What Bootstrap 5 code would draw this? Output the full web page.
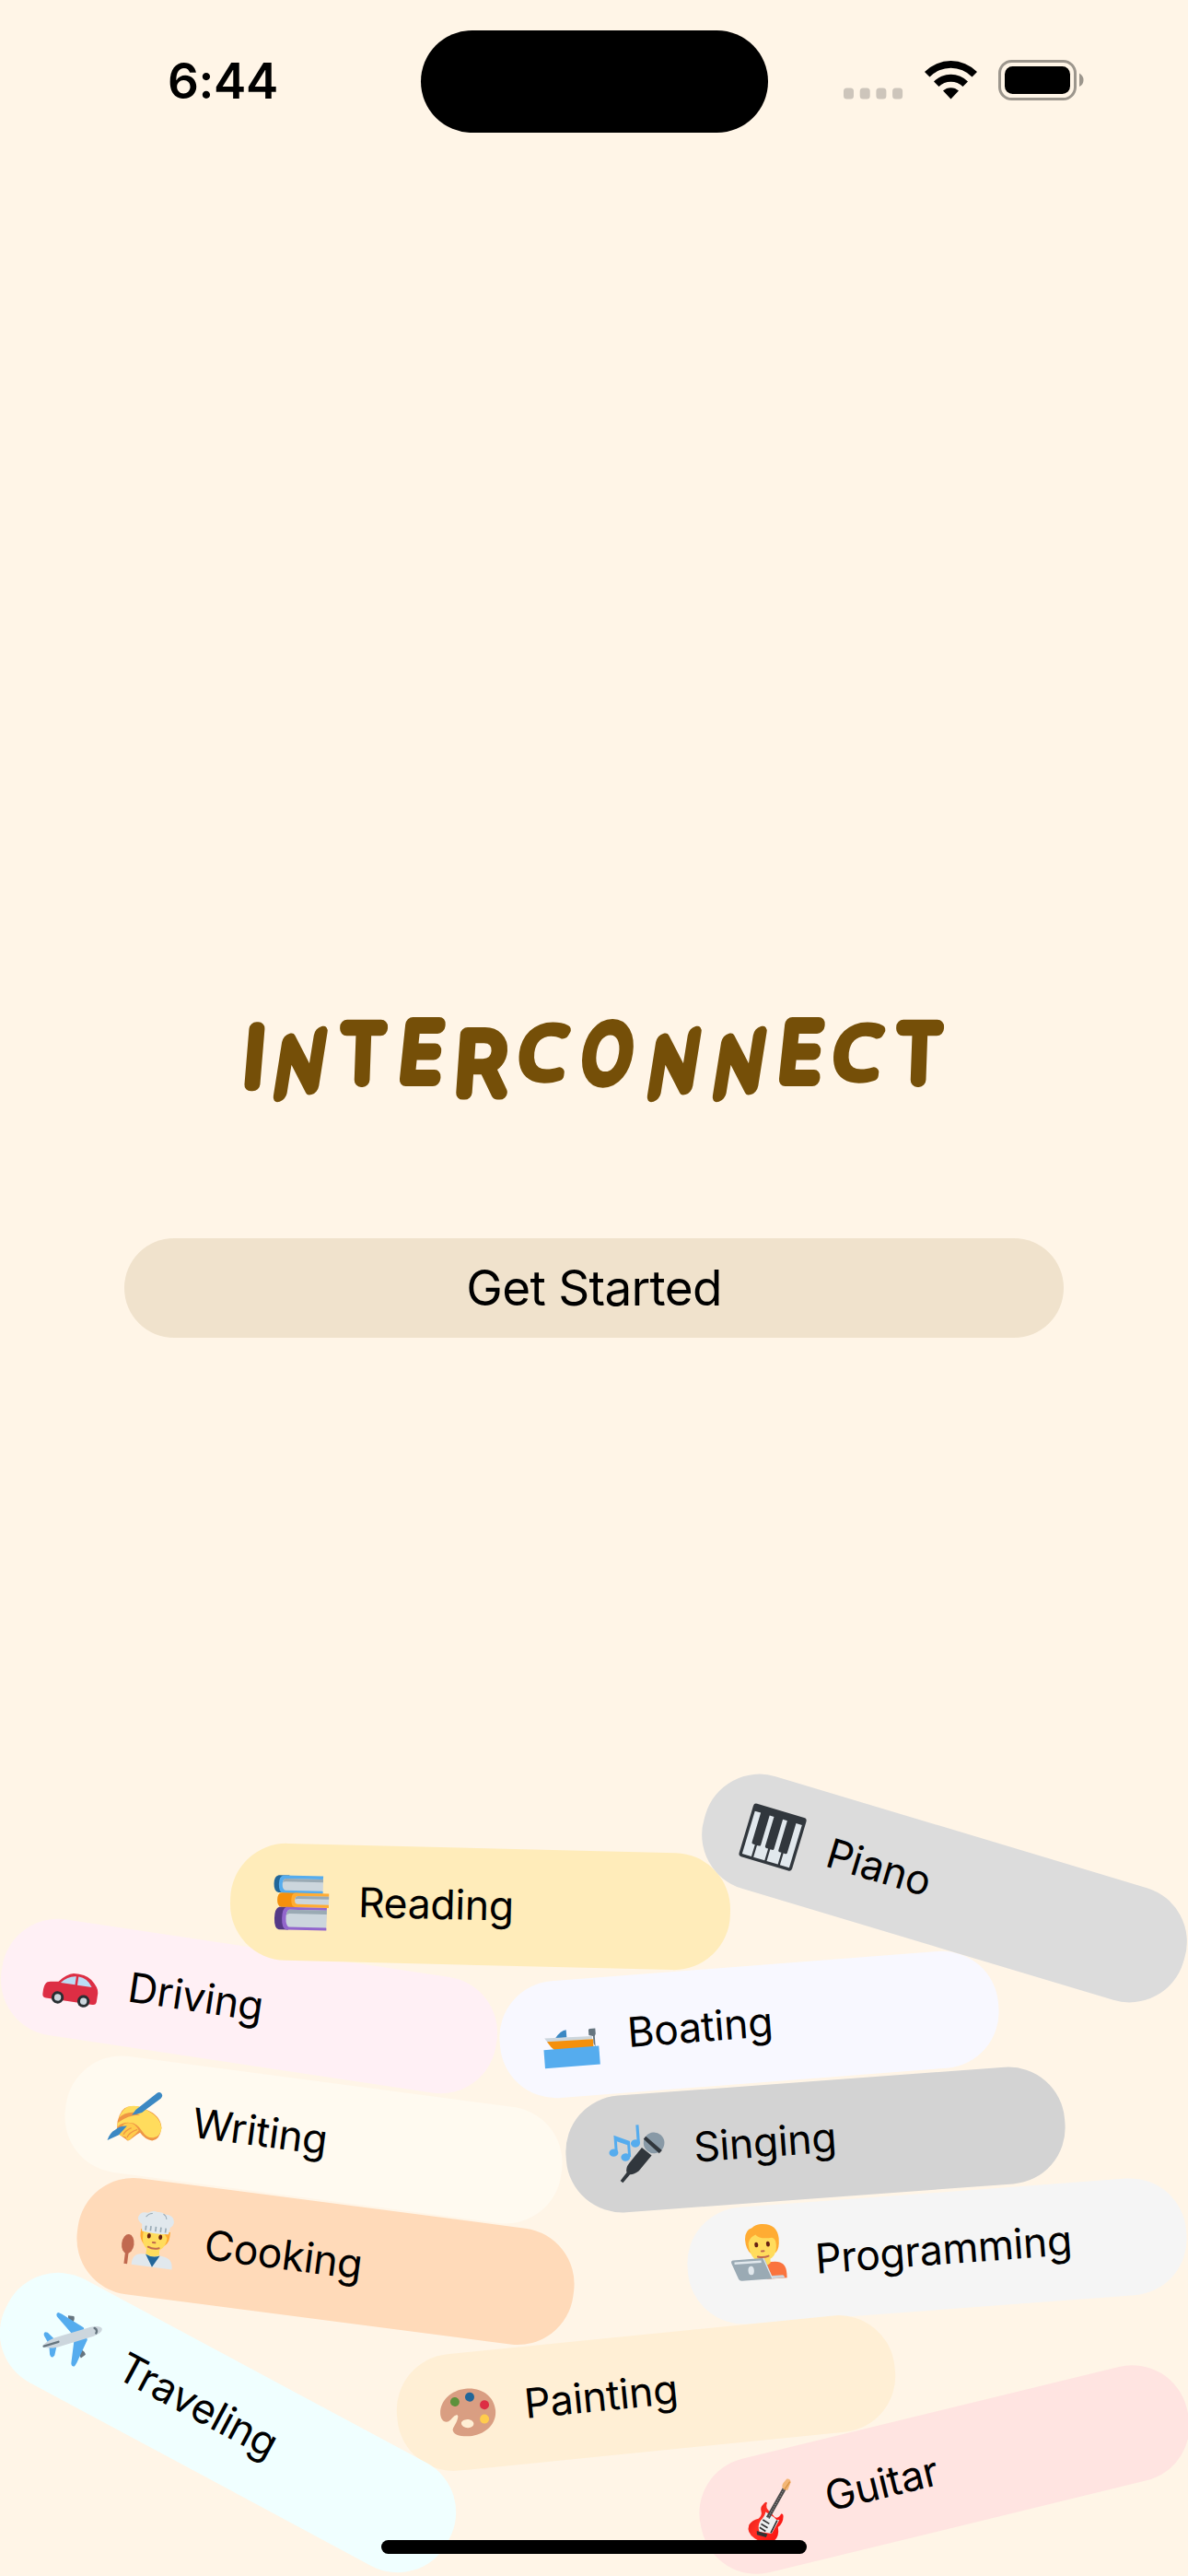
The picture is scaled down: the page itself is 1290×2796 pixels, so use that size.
<!DOCTYPE html>
<html lang="en">
<head>
<meta charset="utf-8">
<meta name="viewport" content="width=device-width, initial-scale=1">
<title>Interconnect</title>
<link href="https://cdn.jsdelivr.net/npm/bootstrap@5.3.0/dist/css/bootstrap.min.css" rel="stylesheet">
<style>
  body { background: #fff5e7; color: #000; font-family: Inter, "Liberation Sans", sans-serif; }
  .screen { width: 1290px; height: 2796px; }
  .status-bar { height: 178px; padding: 33px 113px 0 0; }
  .clock { width: 457px; flex: none; padding: 24px 0 0 182px; font-size: 53px; font-weight: 600; line-height: 62px; letter-spacing: -.4px; }
  .island { width: 377px; height: 111px; flex: none; background: #000; }
  .indicators { flex: none; margin-left: auto; margin-top: 30px; }
  .brand { margin-top: 907px; height: 150px; line-height: 1; }
  .brand svg { display: block; overflow: visible; }
  .brand text { font-family: Inter, sans-serif; font-weight: 100; font-size: 100px; text-anchor: middle;
    fill: #754f08; stroke: #754f08; stroke-width: 20; stroke-linejoin: round; stroke-linecap: round; }
  .brand .open { font-family: "Open Sans", sans-serif; font-weight: 300; stroke-width: 16; }
  .brand .slim { stroke-width: 17.5; }
  .start { width: 1020px; height: 108px; margin-top: 109px; padding: 0; background: #f0e2cc; color: #000; font-size: 53px; line-height: 108px; letter-spacing: -.7px; border: 0; }
  .start:hover { background: #e8d8be; }
  .chip { position: absolute; width: 543px; height: 127px; border-radius: 61px; padding-left: 47px; font-size: 44.5px; line-height: 1; white-space: nowrap; letter-spacing: -.3px; }
  .chip svg { width: 60px; height: 60px; flex: none; margin-right: 32px; overflow: visible; }
  .chip span { position: relative; top: -1.5px; }
  .reading { left: 249.8px; top: 553.7px; transform: rotate(1.4deg); background: #ffecba; }
  .piano { left: 753.6px; top: 534.3px; transform: rotate(16.7deg); background: #dcdcdc; }
  .driving { left: -.9px; top: 662px; transform: rotate(8.55deg); background: #fff0f5; }
  .boating { left: 542.1px; top: 681.8px; transform: rotate(-4.4deg); background: #f8f8ff; }
  .writing { left: 69.1px; top: 806.5px; transform: rotate(7.5deg); background: #fffaf0; }
  .singing { left: 614.1px; top: 807.3px; transform: rotate(-4.2deg); background: #d3d3d3; }
  .cooking { left: 82.2px; top: 939.1px; transform: rotate(7.4deg); background: #ffdab9; }
  .programming { left: 746.1px; top: 927.5px; transform: rotate(-4.25deg); background: #f5f5f5; }
  .programming svg { position: relative; top: -14px; }
  .traveling { left: -23.8px; top: 1113.8px; transform: rotate(28.2deg); background: #f0ffff; }
  .painting { left: 430.4px; top: 1081.8px; transform: rotate(-5.7deg); background: #ffefd5; }
  .guitar { left: 754px; top: 1164.5px; transform: rotate(-13.7deg); background: #ffe4e1; }
  .home-bar { position: absolute; left: 414px; bottom: 24px; width: 462px; height: 15px; background: #000; }
</style>
</head>
<body>
<div class="screen d-flex flex-column align-items-center position-relative overflow-hidden">

  <header class="status-bar d-flex w-100 align-items-start">
    <div class="clock">6:44</div>
    <div class="island rounded-pill"></div>
    <svg class="indicators" width="264" height="80" viewBox="0 0 264 80">
      <g fill="#cdc5bb"><rect x="3" y="32.5" width="11" height="12" rx="3.5"/><rect x="20.7" y="32.5" width="11" height="12" rx="3.5"/><rect x="38.4" y="32.5" width="11" height="12" rx="3.5"/><rect x="56.1" y="32.5" width="11" height="12" rx="3.5"/></g>
      <g>
        <path d="M91 15A40 40 0 0 1 148 15L142.500 20.500A32 32 0 0 0 96.500 20.500Z"/>
        <path d="M101 25.500A26 26 0 0 1 138 25.500L132.500 31A18.500 18.500 0 0 0 106.500 31Z"/>
        <path d="M111 35.500A12.500 12.500 0 0 1 128 35.500L119.500 44.500Z"/>
      </g>
      <rect x="172.500" y="3.500" width="82" height="41" rx="13" fill="none" stroke="#9c968d" stroke-width="3"/>
      <rect x="178" y="9" width="71" height="30" rx="8.500"/>
      <path d="M259 16.500Q263.500 19 263.500 24Q263.500 29 259 31Z" fill="#9c968d"/>
    </svg>
  </header>

  <h1 class="brand w-100 mb-0"><svg width="1290" height="150" viewBox="0 -10 1290 150"><text class="slim" transform="translate(274 82) skewX(-4.700) scale(.86 .83)">I</text><text transform="translate(321.500 89) skewX(-9) skewY(-13) scale(.64 .8)">N</text><text transform="translate(393 77) skewX(-2) scale(.75 .79)">T</text><text transform="translate(454.500 76) skewX(-6) scale(.74 .81)">E</text><text class="slim" transform="translate(520 91) skewX(-4) scale(.88 .87)">R</text><text class="open" transform="translate(586 74) skewX(-7) scale(.77 .74)">C</text><text transform="translate(656 77) skewX(-8) scale(.68 .79)">O</text><text transform="translate(727.500 89) skewX(-9) skewY(-13) scale(.64 .8)">N</text><text transform="translate(798.500 89) skewX(-9) skewY(-13) scale(.64 .8)">N</text><text transform="translate(866.500 76) skewX(-6) scale(.74 .81)">E</text><text class="open" transform="translate(927.500 74) skewX(-7) scale(.77 .74)">C</text><text transform="translate(997 77) skewX(-2) scale(.75 .79)">T</text></svg></h1>

  <button type="button" class="start btn rounded-pill">Get Started</button>

  <section class="position-relative w-100 flex-grow-1">
    <div class="chip driving d-flex align-items-center">
      <svg viewBox="0 0 36 36"><path fill="#dd2e44" d="M.5 28.500C.5 23 1.500 21.300 5 21L9.500 20.300Q14 14.500 18.500 13.600Q26 12.800 30.500 16Q36 20.500 36 24V29.500Q36 32 33.500 32H3Q.5 32 .5 29.500Z"/><path fill="#bbddf5" d="M11 20.800Q15 15.800 20.500 15.300V20.800ZM22 15.300Q28 15.300 31.500 20.800H22Z"/><g fill="#292f33"><circle cx="10.500" cy="30.600" r="4"/><circle cx="27.500" cy="30.600" r="4"/></g><g fill="#ccd6dd"><circle cx="10.500" cy="30.600" r="2.200"/><circle cx="27.500" cy="30.600" r="2.200"/></g></svg>
      <span>Driving</span>
    </div>
    <div class="chip reading d-flex align-items-center">
      <svg viewBox="0 0 36 36"><path fill="#226699" d="M3 .4H10V11.600H3Q0 11 0 6Q0 1 3 .4Z"/><path fill="#55acee" d="M6 .4H32V2.200L31.500 2.500V10L32 10.300V12H6Q3.200 11.500 3.200 6.200Q3.200 1 6 .4Z"/><path fill="#ccd6dd" d="M7.500 2.500H32V10.200H7.500Q5.500 9.500 5.500 6.300Q5.500 3.100 7.500 2.500Z"/><path fill="#9aaab4" d="M7.500 2.500H32V4.500H8Q6 4.500 5.600 5.400Q6 3 7.500 2.500Z"/><path fill="#f4900c" d="M5 11.700H16V21H5Q2.400 20.500 2.400 16.400Q2.400 12.200 5 11.700Z"/><path fill="#ffac33" d="M14 11.700H36V13.500L35.700 13.900V18.500L36 19V21H14Q11.500 20.500 11.500 16.400Q11.500 12.200 14 11.700Z"/><path fill="#ccd6dd" d="M15.500 13.700H36V19H15.500Q13.800 18.600 13.800 16.400Q13.800 14.200 15.500 13.700Z"/><path fill="#9aaab4" d="M15.500 13.700H36V15.500H16Q14.500 15.500 14 16Q14 14.200 15.500 13.700Z"/><path fill="#553986" d="M3.800 21H10V35.800H3.800Q.8 35 .8 28.400Q.8 22 3.800 21Z"/><path fill="#9266cc" d="M8.500 21H34.800V22.600L34.500 23V33.700L34.800 34.200V35.800H8.500Q5.700 35 5.700 28.400Q5.700 22 8.500 21Z"/><path fill="#ccd6dd" d="M10.300 22.700H34.800V34H10.300Q8.300 33 8.300 28.400Q8.300 23.500 10.300 22.700Z"/><path fill="#9aaab4" d="M10.300 22.700H34.800V25.200H10.500Q8.800 25.500 8.500 26.500Q8.800 23.200 10.300 22.700Z"/></svg>
      <span>Reading</span>
    </div>
    <div class="chip boating d-flex align-items-center">
      <svg viewBox="0 0 36 36"><path fill="#3b88c3" d="M8 17Q12 12 15.500 12V17Z"/><path fill="#ccd6dd" d="M1 16.500L32 17.300V19.500H3Z"/><path fill="#f4900c" d="M2.500 18.800L32.500 19.300V25H7.500Q4.500 22.500 2.500 18.800Z"/><path fill="#66757f" d="M30 13.200Q30 12.400 31 12.400H34.500V16L33.800 17.500V24.500L32.700 22V17.300L30 16.500Z"/><path fill="#55acee" d="M0 24H36V36H0Z"/></svg>
      <span>Boating</span>
    </div>
    <div class="chip piano d-flex align-items-center">
      <svg viewBox="0 0 36 36"><rect width="36" height="36" rx="2" fill="#31373d"/><path fill="#e1e8ed" d="M2 5H6V25Q6 26 7 26H8.300V34H2ZM12 5H15V25Q15 26 16 26H17.300V34H9.700V26H11Q12 26 12 25ZM21 5H24V25Q24 26 25 26H26.300V34H18.700V26H20Q21 26 21 25ZM30 5H34V34H27.700V26H29Q30 26 30 25Z"/></svg>
      <span>Piano</span>
    </div>
    <div class="chip writing d-flex align-items-center">
      <svg viewBox="0 0 36 36"><path fill="#ef9645" d="M6.500 22.500Q7.500 13.500 12 12.200Q18 9.800 24 12.500Q34 15 35.500 23Q35.300 31 30.500 32Q26 32 22 27.800Q18 31 17 32.500Q15 35 13.700 33.500L10 31.500L7 30Z"/><path fill="#ffdc5d" d="M7 20.200Q9 13.200 12.500 12Q18 9.700 25 13Q34 16.500 35.500 23Q35.500 29 31 30Q27 31 23.500 27Q19 21.500 14.500 22.300Q9.500 22.500 7 26Q6.300 24.500 7 23.200Q13 17.200 20.500 16.500L17 15.200Q10.500 15.500 7 20.200Z"/><path fill="#ffcc4d" d="M11 23.500Q17 20.500 21 26.500L19 29.500Q17 31.500 16.700 32.300Q15.800 34.200 14 33.500L13.300 32L9.500 31.300L7 30Z"/><path fill="none" stroke="#ef9645" stroke-width=".8" d="M16 25.500Q12 28 11.500 30.500M20 26Q15 28.500 14 32"/><path fill="#3b88c3" d="M29.500 1Q31 -.5 32.500 .8Q34 2.200 32.500 4L21.500 14.700Q18 16.500 15.200 17.200L17.300 13.500ZM13 24.600L8.500 31.200L1.500 35.500Q2.500 30.500 5.700 28.200Q8 25.200 13 24.600Z"/></svg>
      <span>Writing</span>
    </div>
    <div class="chip singing d-flex align-items-center">
      <svg viewBox="0 0 36 36"><path fill="#31373d" d="M21.500 14.500L27.500 20L18.500 29.500Q15 31.800 12.500 31.500L7.500 36.500L6 35L10.500 30Q9.800 27 12.500 24Z"/><circle cx="29.600" cy="12" r="6.800" fill="#8899a6"/><path fill="#31373d" d="M24.600 7.400L23 9L32.500 19L34.500 17.200Z"/><g fill="#55acee"><path d="M3.800 5.200L14 9.700V20H12.200V12.200L5.600 9.200V17H3.800Z"/><ellipse cx="3" cy="16.500" rx="3" ry="2.500"/><ellipse cx="10.500" cy="20" rx="3" ry="2.500"/><rect x="18.600" y="-.5" width="1.900" height="12"/><ellipse cx="17.500" cy="11.500" rx="3" ry="2.500"/></g></svg>
      <span>Singing</span>
    </div>
    <div class="chip cooking d-flex align-items-center">
      <svg viewBox="0 0 36 36"><ellipse cx="5.500" cy="23" rx="4" ry="6.300" fill="#c1694f"/><rect x="4.500" y="28" width="2.200" height="8" fill="#c1694f"/><path fill="#ffac33" d="M12.800 12H32V15Q32 20 28 22H16Q12.800 19 12.800 15Z"/><path fill="#ffdc5d" d="M14.500 12H30.500V15.500Q30.500 22 26.500 24.500V30H18V24.500Q14.500 22 14.500 16Z"/><path fill="#ffac33" d="M26 12H31V18Q30.500 14.500 26 12.500Z"/><path fill="#e1e8ed" d="M9.500 36Q9 28.500 15.500 28.200L18.500 28H26.500L29 28.200Q36 28.500 36 36Z"/><path fill="#ffdc5d" d="M18.200 25.500H26.500V28Q22.300 30.300 18.200 28Z"/><path fill="#226699" d="M17.800 28Q22.300 30.300 27.200 28L23 36Z"/><path fill="#e1e8ed" d="M13 9Q9.500 7 10 4.500Q11 .5 16 1.200Q19 -1 22 0Q25 -.8 27 .8Q33 .5 33.500 5Q33.500 8 31.500 9L31 13.500Q22 14.500 13.500 13.500Z"/><path stroke="#99aab5" fill="none" stroke-width=".6" d="M15 4Q16.500 1.500 19 1.300M28.500 4Q28 1.500 26 .8"/><path stroke="#99aab5" stroke-width="1" d="M15.800 9.700v3M19 9.500v3.200M22.300 9.500v3.200M25.600 9.500v3.200M28.800 9.700v3"/><g fill="#662113"><ellipse cx="18.500" cy="16" rx="1.200" ry="1.700"/><ellipse cx="26" cy="16" rx="1.200" ry="1.700"/></g><path fill="none" stroke="#c1694f" stroke-width="1.200" stroke-linecap="round" d="M21.500 20H23M18.800 23.200Q22.300 24.700 26 23.200"/></svg>
      <span>Cooking</span>
    </div>
    <div class="chip programming d-flex align-items-center">
      <svg viewBox="0 0 36 36"><path fill="#fa743e" d="M20 25H29Q36 25.500 36 33V36H23Z"/><path fill="#ffdc5d" d="M16.500 20H26V25.500Q21.500 29 16.500 26Z"/><path fill="#ffac33" d="M21.500 0Q32 0 32.500 10Q32.500 17 30 19H14Q10.500 16 10.500 9Q11 3 15.500 2Q18 0 21.500 0Z"/><path fill="#ffdc5d" d="M12.500 12Q13 8.500 17.500 6.500Q20 10 28 9.300Q30.500 10 30.500 14Q30.500 20 27 22.500Q21.500 25.500 16 22.500Q12.500 19 12.500 12Z"/><g fill="#662113"><ellipse cx="17.600" cy="13.200" rx="1.200" ry="1.700"/><ellipse cx="25.200" cy="13.200" rx="1.200" ry="1.700"/></g><path fill="none" stroke="#c1694f" stroke-width="1.200" stroke-linecap="round" d="M20.700 17.600H22.200M18 21Q21.500 22.200 25 21"/><path fill="#ccd6dd" d="M20 34H33.500Q34.500 34.500 34.500 36H20Z"/><path fill="#9aaab4" d="M1.800 22.200H20.500Q22 22.200 22.500 23.500L26.700 36H6.500Q5 36 4.500 34.800L.5 24Q.2 22.200 1.800 22.200Z"/><path stroke="#e1e8ed" stroke-width="1.500" d="M2.500 24.300H20"/><path stroke="#e1e8ed" stroke-width=".7" d="M21.500 22.200L26.500 36"/><ellipse cx="13" cy="29.700" rx="1.900" ry="2.900" fill="#e1e8ed"/></svg>
      <span>Programming</span>
    </div>
    <div class="chip painting d-flex align-items-center">
      <svg viewBox="0 0 36 36"><path fill="#d99e82" fill-rule="evenodd" d="M18 3.200C28.500 3.200 36 10 36 19C36 28 28 34.200 17.500 34.200C11.500 34 7 32 7 29C7.500 27 10.500 24.500 11.300 20.800C11.500 19 10 19.500 8.800 20.200C6.500 22 5.500 23.500 3.500 23.500C1 23.300 0 20.500 0 18.500C0 10 8 3.200 18 3.200ZM17 23.200C15 23.200 13 24 13 25.500C13 27.200 15 28.700 17.300 28.700C19.500 28.700 21 27.800 21 26.300C21 24.700 19 23.200 17 23.200Z"/><circle cx="10.200" cy="11" r="3" fill="#5c913b"/><circle cx="20.100" cy="8.800" r="3" fill="#226699"/><circle cx="29.200" cy="14.800" r="3" fill="#dd2e44"/><circle cx="28.300" cy="24" r="3" fill="#ffcc4d"/></svg>
      <span>Painting</span>
    </div>
    <div class="chip traveling d-flex align-items-center">
      <svg viewBox="0 0 36 36"><path fill="#66757f" d="M10 5.500L13.500 4Q15 5 15 8L12.500 9.500ZM30.500 26L32 22.500Q31 21 28 21L26.500 23.500Z"/><path fill="#55acee" d="M17 14.500L4 9.500Q2 8 3.500 6.700L6 6.500L22.500 7.500L28.500 13.500L29.500 30L29.300 32.500Q28 34 26.500 32L21.500 19ZM8 28L2.500 24.500Q1 23 2 22L3.500 21.500L10.500 23.500L12.500 25.500L14.500 32.500L14 34Q13 35 11.500 33.500Z"/><path fill="#ccd6dd" d="M33.500 2.500Q35 4.500 31 9.500L13.500 27Q8.500 31 5.500 31Q5 30.800 5 30.500Q5 27.500 9 22.500L26.500 5Q31.500 1 33.500 2.500Z"/><path fill="none" stroke="#66757f" stroke-width="1.400" stroke-linecap="round" d="M29 4.500Q31.500 4.500 31.500 7M5.500 30.500L12.500 23.500"/></svg>
      <span>Traveling</span>
    </div>
    <div class="chip guitar d-flex align-items-center">
      <svg viewBox="0 0 36 36">
        <defs><linearGradient id="gloss" x1="0" y1="0" x2="1" y2="1"><stop offset="0" stop-color="#d8100c"/><stop offset=".4" stop-color="#ff3026"/><stop offset="1" stop-color="#f80808"/></linearGradient></defs>
        <path fill="url(#gloss)" d="M14.500 11.800Q17 9.800 17.300 11.500Q15 14 18 18L20 21.500Q22 23.500 24.500 20.500Q26 20.500 25.500 22.500Q24.500 26.500 20.500 28.500Q20 34.500 16 36.500Q10 38 4 32Q-.5 27 2.500 22.500Q5 20 9.500 20Q12.500 18.500 12.300 15.500Q12.300 13 14.500 11.800Z"/>
        <path fill="#eef0f0" d="M15 17L19.500 21.500Q20.500 24 22.500 24L15.500 31.500L8 28.500Q7.500 24.500 10.500 21.500Q13.500 20 15 17Z"/>
        <path stroke="#4a4848" stroke-width="2.500" d="M15.500 21L31 4.500"/><path stroke="#aaa" stroke-width=".6" stroke-dasharray=".6 1" d="M15.500 21L31 4.500"/>
        <path stroke="#333" stroke-width="1" d="M12 21.500L15.500 25M10.300 23.800L13.800 27.300M8.800 25.800L12 29.200M21 24L15 31"/><path fill="#333" d="M6.500 27.500L12.800 31.200L11.300 33L6 30Z"/>
        <path fill="#f3b676" d="M29.500 4.500Q29 2.500 31 1L33.500 -.8Q36 -.5 35.500 2L32.500 6.300Q30.500 6.500 29.500 4.500Z"/><path stroke="#d99445" stroke-width=".8" d="M30.500 5.500Q33 3.500 35 1.500"/>
      </svg>
      <span>Guitar</span>
    </div>
  </section>

  <div class="home-bar rounded-pill"></div>
</div>
<script src="https://cdn.jsdelivr.net/npm/bootstrap@5.3.0/dist/js/bootstrap.bundle.min.js"></script>
</body>
</html>
